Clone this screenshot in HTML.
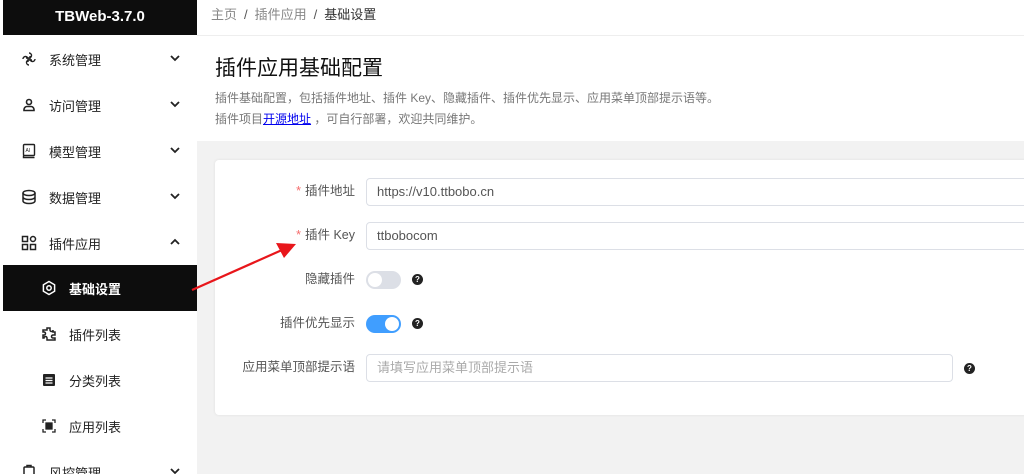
<!DOCTYPE html>
<html><head><meta charset="utf-8">
<style>
*{box-sizing:border-box;margin:0;padding:0}
html,body{width:1024px;height:474px;overflow:hidden}
body{background:#f2f2f2;font-family:"Liberation Sans","Noto Sans CJK SC",sans-serif;position:relative}
.side{position:absolute;left:0;top:0;width:197px;height:474px;background:#fff;border-left:3px solid #fff}
.logo{height:35px;background:#0d0d0d;color:#fff;font-weight:bold;font-size:15px;text-align:center;line-height:33px}
.item{position:absolute;left:3px;width:194px;height:46px;font-size:13px;color:#222;display:flex;align-items:center}
.item svg{position:absolute;left:18px}
.item .t{position:absolute;left:46px}
.item .ch{position:absolute;left:166px;top:17px;width:12px;height:10px}
.sub svg{left:38px}.sub .t{left:66px}
.act{background:#0d0d0d;color:#fff;font-weight:bold}
.main{position:absolute;left:197px;top:0;right:0;height:141px;background:#fff}
.bc{height:36px;border-bottom:1px solid #eee;font-size:13px;color:#888;padding-left:14px;line-height:30px}
.bc b{font-weight:normal;color:#333}
.bc i{font-style:normal;color:#555;margin:0 7px}
h1{position:absolute;left:18px;top:52px;font-size:21px;font-weight:normal;color:#111}
.d{position:absolute;left:18px;font-size:12px;color:#777}
.d a{color:#00e;text-decoration:underline}
.card{position:absolute;left:215px;top:160px;width:830px;height:255px;background:#fff;border-radius:4px;box-shadow:0 0 3px rgba(0,0,0,.08)}
.lab{position:absolute;right:690px;font-size:12.5px;color:#555;text-align:right;white-space:nowrap}
.lab s{text-decoration:none;color:#f56c6c;margin-right:4px}
.inp{position:absolute;left:151px;height:28px;border:1px solid #dcdfe6;border-radius:4px;font-size:13px;color:#555;padding-left:10px;line-height:26px}
.tg{position:absolute;left:151px;width:35px;height:18px;border-radius:9px;background:#dcdfe6}
.tg:after{content:"";position:absolute;top:2px;left:2px;width:14px;height:14px;border-radius:50%;background:#fff}
.tg.on{background:#409eff}.tg.on:after{left:19px}
.q{position:absolute;width:11px;height:11px;border-radius:50%;background:#222;color:#fff;font-size:8px;font-weight:bold;text-align:center;line-height:11px}
</style></head><body>
<div class="side">
<div class="logo">TBWeb-3.7.0</div>
</div>
<div class="item" style="top:36px"><svg width="16" height="16" viewBox="0 0 16 16" fill="none" stroke="#222" stroke-width="1.4"><path d="M8 2a2.5 2.5 0 0 1 0 5H5M8 14a2.5 2.5 0 0 1 0-5h3M2 8a2.5 2.5 0 0 1 5 0v3M14 8a2.5 2.5 0 0 1-5 0V5"/></svg><span class="t">系统管理</span><svg class="ch" viewBox="0 0 12 10"><path d="M2 3l4 4 4-4" fill="none" stroke="#222" stroke-width="1.8"/></svg></div>
<div class="item" style="top:82px"><svg width="16" height="16" viewBox="0 0 16 16" fill="none" stroke="#222" stroke-width="1.6"><circle cx="8" cy="5" r="2.5"/><path d="M3 13.5h10v-1a3 3 0 0 0-3-3H6a3 3 0 0 0-3 3z"/></svg><span class="t">访问管理</span><svg class="ch" viewBox="0 0 12 10"><path d="M2 3l4 4 4-4" fill="none" stroke="#222" stroke-width="1.8"/></svg></div>
<div class="item" style="top:128px"><svg width="16" height="16" viewBox="0 0 16 16" fill="none" stroke="#222" stroke-width="1.4"><rect x="2.5" y="1.5" width="11" height="11" rx="1"/><path d="M2.5 12.5v2h11"/><text x="4.5" y="9" font-size="5" fill="#222" stroke="none" font-family="Liberation Sans">AI</text></svg><span class="t">模型管理</span><svg class="ch" viewBox="0 0 12 10"><path d="M2 3l4 4 4-4" fill="none" stroke="#222" stroke-width="1.8"/></svg></div>
<div class="item" style="top:174px"><svg width="16" height="16" viewBox="0 0 16 16" fill="none" stroke="#222" stroke-width="1.5"><ellipse cx="8" cy="4" rx="6" ry="2.5"/><path d="M2 4v8c0 1.4 2.7 2.5 6 2.5s6-1.1 6-2.5V4M2 8c0 1.4 2.7 2.5 6 2.5S14 9.4 14 8"/></svg><span class="t">数据管理</span><svg class="ch" viewBox="0 0 12 10"><path d="M2 3l4 4 4-4" fill="none" stroke="#222" stroke-width="1.8"/></svg></div>
<div class="item" style="top:220px"><svg width="16" height="16" viewBox="0 0 16 16" fill="none" stroke="#222" stroke-width="1.5"><rect x="1.5" y="1.5" width="5" height="5"/><rect x="1.5" y="9.5" width="5" height="5"/><rect x="9.5" y="9.5" width="5" height="5"/><rect x="9.5" y="1.5" width="5" height="5" rx="2.5"/></svg><span class="t">插件应用</span><svg class="ch" viewBox="0 0 12 10"><path d="M2 7l4-4 4 4" fill="none" stroke="#222" stroke-width="1.8"/></svg></div>
<div class="item sub act" style="top:265px"><svg width="16" height="16" viewBox="0 0 16 16" fill="none" stroke="#fff" stroke-width="1.5"><path d="M8 1.5l5.6 3.25v6.5L8 14.5l-5.6-3.25v-6.5z"/><circle cx="8" cy="8" r="2.2"/></svg><span class="t">基础设置</span></div>
<div class="item sub" style="top:311px"><svg width="16" height="16" viewBox="0 0 16 16" fill="none" stroke="#222" stroke-width="1.5"><path d="M6 2h3v2a1.5 1.5 0 0 0 3 0V6h2v3h-2a1.5 1.5 0 0 0 0 3h2v2H6v-2a1.5 1.5 0 0 0-3 0H2V9h1a1.5 1.5 0 0 0 0-3H2V4h4z"/></svg><span class="t">插件列表</span></div>
<div class="item sub" style="top:357px"><svg width="16" height="16" viewBox="0 0 16 16"><rect x="2" y="2" width="12" height="12" rx="1" fill="#222"/><path d="M4.5 6h7M4.5 8.5h7M4.5 11h7" stroke="#fff" stroke-width="1.2"/></svg><span class="t">分类列表</span></div>
<div class="item sub" style="top:403px"><svg width="16" height="16" viewBox="0 0 16 16" fill="none" stroke="#222" stroke-width="1.3"><path d="M2 5V2h3M11 2h3v3M14 11v3h-3M5 14H2v-3"/><rect x="5" y="5" width="2.5" height="2.5" fill="#222"/><rect x="8.5" y="5" width="2.5" height="2.5" fill="#222"/><rect x="5" y="8.5" width="2.5" height="2.5" fill="#222"/><rect x="8.5" y="8.5" width="2.5" height="2.5" fill="#222"/></svg><span class="t">应用列表</span></div>
<div class="item" style="top:449px"><svg width="16" height="16" viewBox="0 0 16 16" fill="none" stroke="#222" stroke-width="1.5"><rect x="3" y="3" width="10" height="12" rx="1"/><path d="M6 3V1.5h4V3"/></svg><span class="t">风控管理</span><svg class="ch" viewBox="0 0 12 10"><path d="M2 3l4 4 4-4" fill="none" stroke="#222" stroke-width="1.8"/></svg></div>

<div class="main">
<div class="bc">主页<i>/</i>插件应用<i>/</i><b>基础设置</b></div>
<h1>插件应用基础配置</h1>
<div class="d" style="top:89px">插件基础配置，包括插件地址、插件 Key、隐藏插件、插件优先显示、应用菜单顶部提示语等。</div>
<div class="d" style="top:110px">插件项目<a href="#">开源地址</a> ，可自行部署，欢迎共同维护。</div>
</div>

<div class="card">
<div class="lab" style="top:20px"><s>*</s>插件地址</div>
<div class="inp" style="top:18px;width:700px">https://v10.ttbobo.cn</div>
<div class="lab" style="top:64px"><s>*</s>插件 Key</div>
<div class="inp" style="top:62px;width:700px">ttbobocom</div>
<div class="lab" style="top:108px">隐藏插件</div>
<div class="tg" style="top:111px"></div>
<div class="q" style="left:197px;top:114px">?</div>
<div class="lab" style="top:152px">插件优先显示</div>
<div class="tg on" style="top:155px"></div>
<div class="q" style="left:197px;top:158px">?</div>
<div class="lab" style="top:196px">应用菜单顶部提示语</div>
<div class="inp" style="top:194px;width:587px;color:#aaa">请填写应用菜单顶部提示语</div>
<div class="q" style="left:749px;top:203px">?</div>
</div>

<svg style="position:absolute;left:0;top:0" width="1024" height="474"><line x1="192" y1="290" x2="282" y2="250" stroke="#e8161b" stroke-width="2.2"/><polygon points="296,244 276,243 284,258" fill="#e8161b"/></svg>
</body></html>
